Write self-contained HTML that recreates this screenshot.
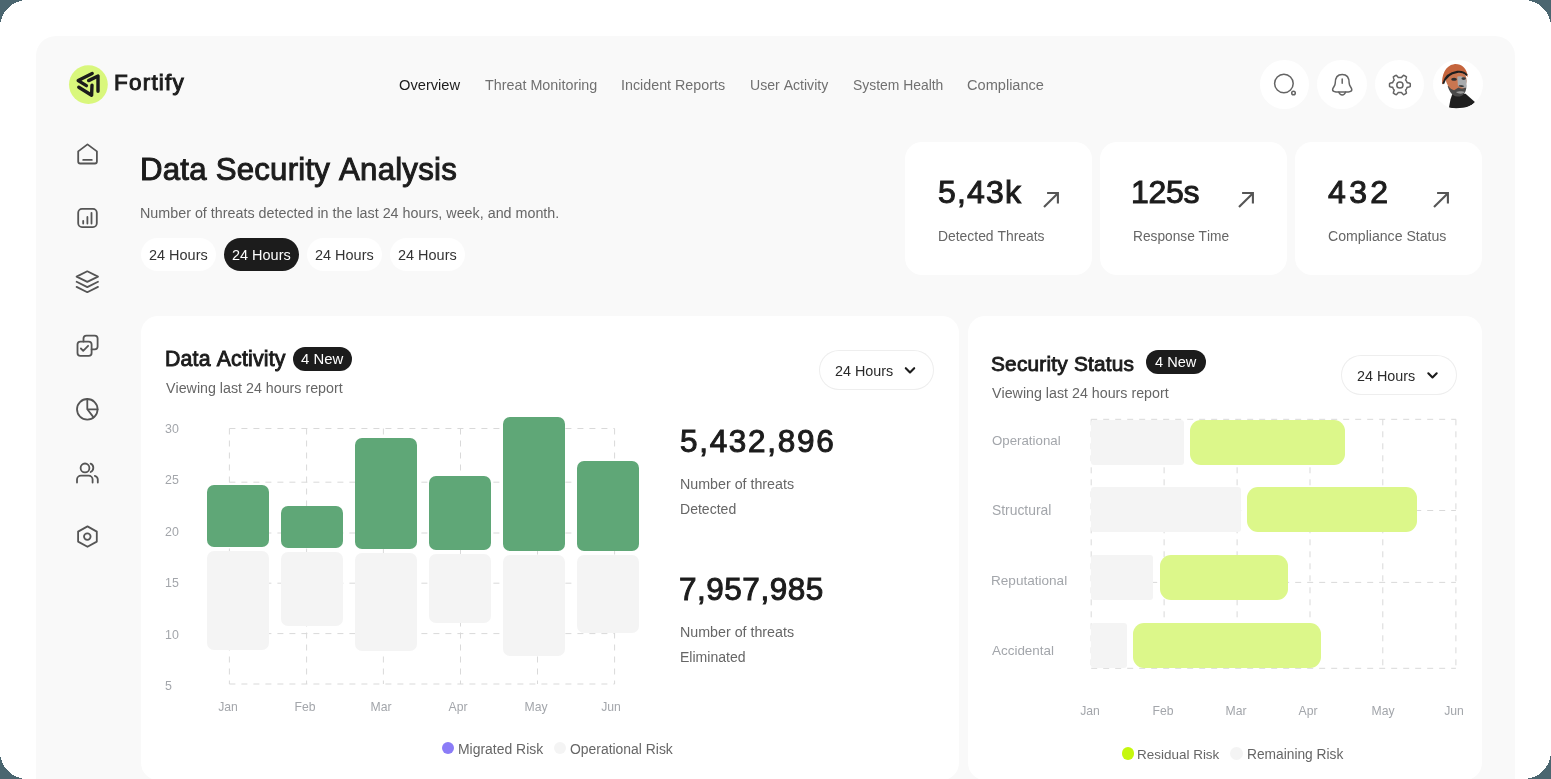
<!DOCTYPE html>
<html><head><meta charset="utf-8">
<style>
html,body{margin:0;padding:0;}
body{width:1551px;height:779px;overflow:hidden;position:relative;background:#4b6670;font-family:"Liberation Sans", sans-serif;}
.frame{position:absolute;left:0;top:0;width:1551px;height:779px;background:#ffffff;}
.t{position:absolute;white-space:nowrap;line-height:1;font-kerning:none;font-variant-ligatures:none;will-change:transform;}
.r{position:absolute;}
</style></head><body>
<div class="frame"></div>
<svg class="r" style="left:0;top:0" width="1551" height="779" viewBox="0 0 1551 779" shape-rendering="crispEdges"><g fill="#4b6670"><path d="M0 0 H27.5 A27.5 27.5 0 0 0 0 27.5 Z"/><path d="M1551 0 H1523.5 A27.5 27.5 0 0 1 1551 27.5 Z"/><path d="M0 779 H27.5 A27.5 27.5 0 0 1 0 751.5 Z"/><path d="M1551 779 H1523.5 A27.5 27.5 0 0 0 1551 751.5 Z"/></g></svg>
<div class="r" style="left:36.00px;top:36.00px;width:1479.00px;height:784.00px;background:#f9f9f9;border-radius:20px;"></div>
<svg class="r" style="left:64px;top:60px" width="50" height="50" viewBox="64 60 50 50">
<circle cx="88.4" cy="84.6" r="19.4" fill="#d9f77c"/>
<g fill="none" stroke="#1c1c1c" stroke-width="3.4" stroke-linecap="round" stroke-linejoin="round">
<path d="M92.2 73.6 L78.2 80.6 L86.4 85.6"/>
<path d="M78.8 87.2 L91.6 95.2 L92.0 85.2"/>
<path d="M88.6 80.6 L98.0 76.0 L98.0 91.2"/>
</g></svg>
<div class="t" style="left:114.15px;top:72.00px;font-size:22.5px;color:#1c1c1c;-webkit-text-stroke:1.0px #1c1c1c;letter-spacing:1.215px;">Fortify</div>
<div class="t" style="left:398.60px;top:78.00px;font-size:14.675px;color:#1c1c1c;">Overview</div>
<div class="t" style="left:485.18px;top:78.00px;font-size:14.335px;color:#707070;">Threat Monitoring</div>
<div class="t" style="left:621.38px;top:78.00px;font-size:14.301px;color:#707070;">Incident Reports</div>
<div class="t" style="left:749.71px;top:78.00px;font-size:14.095px;color:#707070;">User Activity</div>
<div class="t" style="left:852.87px;top:79.00px;font-size:13.908px;color:#707070;">System Health</div>
<div class="t" style="left:967.46px;top:78.00px;font-size:14.58px;color:#707070;">Compliance</div>
<div class="r" style="left:1259.60px;top:59.80px;width:49.40px;height:49.40px;background:#ffffff;border-radius:25px;"></div>
<div class="r" style="left:1317.30px;top:59.80px;width:49.40px;height:49.40px;background:#ffffff;border-radius:25px;"></div>
<div class="r" style="left:1375.00px;top:59.80px;width:49.40px;height:49.40px;background:#ffffff;border-radius:25px;"></div>
<div class="r" style="left:1433.30px;top:59.80px;width:49.40px;height:49.40px;background:#ffffff;border-radius:25px;"></div>
<svg class="r" style="left:0;top:0" width="1551" height="140" viewBox="0 0 1551 140">
<g fill="none" stroke="#646464" stroke-width="1.5" stroke-linecap="round" stroke-linejoin="round">
<circle cx="1283.9" cy="83.5" r="9.3"/>
<circle cx="1293.5" cy="93.0" r="1.8"/>
<g transform="translate(0 0.7)"><path d="M1342.2 73.8 C1336.5 73.8 1335.2 78.5 1335.2 82.5 C1335.2 85.5 1332.6 86.8 1332.6 89 C1332.6 90.3 1334 91 1336 91.2 L1348.4 91.2 C1350.4 91 1351.8 90.3 1351.8 89 C1351.8 86.8 1349.2 85.5 1349.2 82.5 C1349.2 78.5 1347.9 73.8 1342.2 73.8 Z"/>
<path d="M1338.8 91.4 C1339.6 93.6 1340.8 94.4 1342.2 94.4 C1343.6 94.4 1344.8 93.6 1345.6 91.4"/>
<path d="M1342.2 78.4 L1342.2 82.6"/>
</g><circle cx="1399.9" cy="85.0" r="3.1"/>
</g></svg>
<svg class="r" style="left:0;top:0" width="1551" height="140" viewBox="0 0 1551 140"><path d="M1399.90 77.40 L1400.10 77.40 L1400.30 77.41 L1400.50 77.42 L1400.69 77.44 L1400.89 77.47 L1401.09 77.49 L1401.28 77.53 L1401.48 77.57 L1401.78 77.16 L1402.11 76.76 L1402.46 76.37 L1402.83 76.00 L1403.22 75.64 L1403.63 75.29 L1403.88 75.39 L1404.13 75.50 L1404.38 75.61 L1404.62 75.73 L1404.86 75.86 L1405.10 75.99 L1405.33 76.13 L1405.56 76.28 L1405.79 76.43 L1406.01 76.59 L1406.23 76.75 L1406.44 76.92 L1406.35 77.45 L1406.23 77.96 L1406.10 78.47 L1405.93 78.97 L1405.75 79.45 L1405.55 79.91 L1405.68 80.06 L1405.81 80.22 L1405.93 80.37 L1406.05 80.53 L1406.16 80.70 L1406.27 80.86 L1406.38 81.03 L1406.48 81.20 L1406.58 81.37 L1406.67 81.55 L1406.76 81.73 L1406.84 81.91 L1406.92 82.09 L1407.00 82.28 L1407.06 82.46 L1407.13 82.65 L1407.63 82.71 L1408.14 82.79 L1408.65 82.90 L1409.16 83.03 L1409.67 83.19 L1410.17 83.37 L1410.21 83.64 L1410.24 83.91 L1410.27 84.18 L1410.29 84.46 L1410.30 84.73 L1410.30 85.00 L1410.30 85.27 L1410.29 85.54 L1410.27 85.82 L1410.24 86.09 L1410.21 86.36 L1410.17 86.63 L1409.67 86.81 L1409.16 86.97 L1408.65 87.10 L1408.14 87.21 L1407.63 87.29 L1407.13 87.35 L1407.06 87.54 L1407.00 87.72 L1406.92 87.91 L1406.84 88.09 L1406.76 88.27 L1406.67 88.45 L1406.58 88.63 L1406.48 88.80 L1406.38 88.97 L1406.27 89.14 L1406.16 89.30 L1406.05 89.47 L1405.93 89.63 L1405.81 89.78 L1405.68 89.94 L1405.55 90.09 L1405.75 90.55 L1405.93 91.03 L1406.10 91.53 L1406.23 92.04 L1406.35 92.55 L1406.44 93.08 L1406.23 93.25 L1406.01 93.41 L1405.79 93.57 L1405.56 93.72 L1405.33 93.87 L1405.10 94.01 L1404.86 94.14 L1404.62 94.27 L1404.38 94.39 L1404.13 94.50 L1403.88 94.61 L1403.63 94.71 L1403.22 94.36 L1402.83 94.00 L1402.46 93.63 L1402.11 93.24 L1401.78 92.84 L1401.48 92.43 L1401.28 92.47 L1401.09 92.51 L1400.89 92.53 L1400.69 92.56 L1400.50 92.58 L1400.30 92.59 L1400.10 92.60 L1399.90 92.60 L1399.70 92.60 L1399.50 92.59 L1399.30 92.58 L1399.11 92.56 L1398.91 92.53 L1398.71 92.51 L1398.52 92.47 L1398.32 92.43 L1398.02 92.84 L1397.69 93.24 L1397.34 93.63 L1396.97 94.00 L1396.58 94.36 L1396.17 94.71 L1395.92 94.61 L1395.67 94.50 L1395.42 94.39 L1395.18 94.27 L1394.94 94.14 L1394.70 94.01 L1394.47 93.87 L1394.24 93.72 L1394.01 93.57 L1393.79 93.41 L1393.57 93.25 L1393.36 93.08 L1393.45 92.55 L1393.57 92.04 L1393.70 91.53 L1393.87 91.03 L1394.05 90.55 L1394.25 90.09 L1394.12 89.94 L1393.99 89.78 L1393.87 89.63 L1393.75 89.47 L1393.64 89.30 L1393.53 89.14 L1393.42 88.97 L1393.32 88.80 L1393.22 88.63 L1393.13 88.45 L1393.04 88.27 L1392.96 88.09 L1392.88 87.91 L1392.80 87.72 L1392.74 87.54 L1392.67 87.35 L1392.17 87.29 L1391.66 87.21 L1391.15 87.10 L1390.64 86.97 L1390.13 86.81 L1389.63 86.63 L1389.59 86.36 L1389.56 86.09 L1389.53 85.82 L1389.51 85.54 L1389.50 85.27 L1389.50 85.00 L1389.50 84.73 L1389.51 84.46 L1389.53 84.18 L1389.56 83.91 L1389.59 83.64 L1389.63 83.37 L1390.13 83.19 L1390.64 83.03 L1391.15 82.90 L1391.66 82.79 L1392.17 82.71 L1392.67 82.65 L1392.74 82.46 L1392.80 82.28 L1392.88 82.09 L1392.96 81.91 L1393.04 81.73 L1393.13 81.55 L1393.22 81.37 L1393.32 81.20 L1393.42 81.03 L1393.53 80.86 L1393.64 80.70 L1393.75 80.53 L1393.87 80.37 L1393.99 80.22 L1394.12 80.06 L1394.25 79.91 L1394.05 79.45 L1393.87 78.97 L1393.70 78.47 L1393.57 77.96 L1393.45 77.45 L1393.36 76.92 L1393.57 76.75 L1393.79 76.59 L1394.01 76.43 L1394.24 76.28 L1394.47 76.13 L1394.70 75.99 L1394.94 75.86 L1395.18 75.73 L1395.42 75.61 L1395.67 75.50 L1395.92 75.39 L1396.17 75.29 L1396.58 75.64 L1396.97 76.00 L1397.34 76.37 L1397.69 76.76 L1398.02 77.16 L1398.32 77.57 L1398.52 77.53 L1398.71 77.49 L1398.91 77.47 L1399.11 77.44 L1399.30 77.42 L1399.50 77.41 L1399.70 77.40Z" fill="none" stroke="#646464" stroke-width="1.5" stroke-linejoin="round"/></svg>
<svg class="r" style="left:1438px;top:60px" width="40" height="50" viewBox="0 0 623 779">
<defs><clipPath id="avc"><circle cx="311.5" cy="381.6" r="384"/></clipPath></defs>
<g clip-path="url(#avc)">
<path d="M170 745 L195 610 L225 525 L430 525 L575 655 C520 720 400 770 170 745 Z" fill="#1f1f1f"/>
<path d="M150 400 C170 480 220 560 300 570 C380 575 430 520 440 440 L440 380 L300 400 Z" fill="#4a4a4a"/>
<path d="M120 300 C150 210 260 180 360 200 C420 215 450 260 445 330 L430 420 C400 450 350 450 320 430 L250 470 C180 450 130 380 120 300 Z" fill="#c97650"/>
<path d="M300 260 C360 240 430 260 445 320 L440 430 C400 440 340 420 310 400 Z" fill="#a9abad"/>
<ellipse cx="250" cy="300" rx="45" ry="25" fill="#2f2f2f"/>
<ellipse cx="400" cy="290" rx="35" ry="20" fill="#3a3a3a"/>
<path d="M320 400 C350 390 390 395 410 410 C380 425 340 420 320 400 Z" fill="#2f2f2f"/>
<path d="M280 500 C320 480 390 480 420 500 C390 530 320 535 280 500 Z" fill="#9a9a9a"/>
<path d="M65 370 C55 250 110 80 250 65 C360 55 450 120 465 265 C400 200 300 170 200 210 C130 240 90 300 80 380 Z" fill="#c5643c"/>
<path d="M80 370 C110 270 190 200 300 185 C370 178 420 200 450 240" fill="none" stroke="#1f1f1f" stroke-width="32"/>
</g></svg>
<svg class="r" style="left:0;top:120px" width="130" height="450" viewBox="0 120 130 450">
<g fill="none" stroke="#555555" stroke-width="1.8" stroke-linecap="round" stroke-linejoin="round">
<path d="M87.5 144.4 L78.2 151.4 L78.2 161.5 Q78.2 163.5 80.2 163.5 L94.9 163.5 Q96.9 163.5 96.9 161.5 L96.9 151.4 Z"/>
<path d="M83.2 159.9 L91.8 159.9"/>
<rect x="78.2" y="208.9" width="18.6" height="18.2" rx="3.8"/>
<path d="M83.2 220.8 L83.2 223.6 M87.4 216.9 L87.4 223.6 M91.5 212.8 L91.5 223.6"/>
<path d="M87.3 271.3 L76.6 276.6 L87.3 281.9 L98.0 276.6 Z"/>
<path d="M76.6 281.8 L87.3 287.1 L98.0 281.8"/>
<path d="M76.6 286.9 L87.3 292.2 L98.0 286.9"/>
<path d="M83.5 341.6 L83.5 338.5 Q83.5 335.6 86.4 335.6 L94.7 335.6 Q97.6 335.6 97.6 338.5 L97.6 346.6 Q97.6 349.4 94.7 349.4 L91.6 349.4"/>
<rect x="77.5" y="341.7" width="14.1" height="14.1" rx="2.9"/>
<path d="M80.9 348.5 L83.2 350.8 L88.1 345.8"/>
<circle cx="87.3" cy="409.3" r="10.3"/>
<path d="M87.3 399.0 L87.3 409.3 L97.6 409.3 M87.3 409.3 L93.6 417.4"/>
<circle cx="85.0" cy="467.9" r="4.4"/>
<path d="M90.6 463.6 A4.6 4.6 0 0 1 90.6 472.0"/>
<path d="M77.0 482.5 L77.0 479.6 A4 4 0 0 1 81 475.6 L88.6 475.6 A4 4 0 0 1 92.6 479.6 L92.6 482.5"/>
<path d="M94.8 475.8 A4 4 0 0 1 97.8 479.6 L97.8 482.5"/>
<path d="M87.5 526.4 L96.8 531.6 L96.8 541.6 L87.5 546.8 L78.1 541.6 L78.1 531.6 Z"/>
<circle cx="87.3" cy="536.6" r="3.3"/>
</g></svg>
<div class="t" style="left:139.64px;top:154.00px;font-size:31.2px;color:#1c1c1c;-webkit-text-stroke:1.0px #1c1c1c;letter-spacing:0.227px;">Data Security Analysis</div>
<div class="t" style="left:139.83px;top:206.00px;font-size:14.32px;color:#666666;">Number of threats detected in the last 24 hours, week, and month.</div>
<div class="r" style="left:140.50px;top:238.00px;width:75.50px;height:33.00px;background:#ffffff;border-radius:17px;"></div>
<div class="t" style="left:148.57px;top:248.00px;font-size:14.479px;color:#333333;">24 Hours</div>
<div class="r" style="left:224.00px;top:238.00px;width:75.00px;height:33.00px;background:#1c1c1c;border-radius:17px;"></div>
<div class="t" style="left:231.87px;top:248.00px;font-size:14.479px;color:#ffffff;">24 Hours</div>
<div class="r" style="left:306.80px;top:238.00px;width:75.20px;height:33.00px;background:#ffffff;border-radius:17px;"></div>
<div class="t" style="left:315.17px;top:248.00px;font-size:14.479px;color:#333333;">24 Hours</div>
<div class="r" style="left:390.10px;top:238.00px;width:74.90px;height:33.00px;background:#ffffff;border-radius:17px;"></div>
<div class="t" style="left:398.27px;top:248.00px;font-size:14.479px;color:#333333;">24 Hours</div>
<div class="r" style="left:905.00px;top:142.00px;width:187.00px;height:133.00px;background:#ffffff;border-radius:17px;"></div>
<div class="t" style="left:937.92px;top:176.00px;font-size:32px;color:#1c1c1c;-webkit-text-stroke:1.0px #1c1c1c;letter-spacing:1.163px;">5,43k</div>
<div class="t" style="left:937.86px;top:230.00px;font-size:13.903px;color:#666666;">Detected Threats</div>
<svg class="r" style="left:1035px;top:185px" width="30" height="30" viewBox="1035 185 30 30"><g fill="none" stroke="#555" stroke-width="2.1" stroke-linecap="butt"><path d="M1044.0 207.1 L1057.4 193.7"/><path d="M1047.1 193.0 L1057.9 193.0 L1057.9 203.5"/></g></svg>
<div class="r" style="left:1100.00px;top:142.00px;width:187.00px;height:133.00px;background:#ffffff;border-radius:17px;"></div>
<div class="t" style="left:1131.36px;top:176.00px;font-size:32px;color:#1c1c1c;-webkit-text-stroke:1.0px #1c1c1c;letter-spacing:-0.299px;">125s</div>
<div class="t" style="left:1132.67px;top:230.00px;font-size:13.728px;color:#666666;">Response Time</div>
<svg class="r" style="left:1230px;top:185px" width="30" height="30" viewBox="1230 185 30 30"><g fill="none" stroke="#555" stroke-width="2.1" stroke-linecap="butt"><path d="M1239.0 207.1 L1252.4 193.7"/><path d="M1242.1 193.0 L1252.9 193.0 L1252.9 203.5"/></g></svg>
<div class="r" style="left:1295.00px;top:142.00px;width:187.00px;height:133.00px;background:#ffffff;border-radius:17px;"></div>
<div class="t" style="left:1327.77px;top:176.00px;font-size:32px;color:#1c1c1c;-webkit-text-stroke:1.0px #1c1c1c;letter-spacing:3.377px;">432</div>
<div class="t" style="left:1327.78px;top:229.00px;font-size:14.11px;color:#666666;">Compliance Status</div>
<svg class="r" style="left:1425px;top:185px" width="30" height="30" viewBox="1425 185 30 30"><g fill="none" stroke="#555" stroke-width="2.1" stroke-linecap="butt"><path d="M1434.0 207.1 L1447.4 193.7"/><path d="M1437.1 193.0 L1447.9 193.0 L1447.9 203.5"/></g></svg>
<div class="r" style="left:141.00px;top:316.00px;width:818.00px;height:464.00px;background:#ffffff;border-radius:17px;"></div>
<div class="r" style="left:968.00px;top:316.00px;width:514.00px;height:464.00px;background:#ffffff;border-radius:17px;"></div>
<div class="t" style="left:165.35px;top:349.00px;font-size:21.3px;color:#1c1c1c;-webkit-text-stroke:0.9px #1c1c1c;letter-spacing:0.169px;">Data Activity</div>
<div class="r" style="left:292.80px;top:346.70px;width:59.30px;height:24.30px;background:#1c1c1c;border-radius:13px;"></div>
<div class="t" style="left:300.86px;top:352.00px;font-size:14.89px;color:#ffffff;">4 New</div>
<div class="t" style="left:165.74px;top:381.00px;font-size:14.269px;color:#666666;">Viewing last 24 hours report</div>
<div class="r" style="left:818.80px;top:350.10px;width:115.60px;height:40.00px;background:#ffffff;border-radius:20px;box-shadow:inset 0 0 0 1px #eeeeee;"></div>
<div class="t" style="left:834.78px;top:364.00px;font-size:14.379px;color:#2a2a2a;">24 Hours</div>
<svg class="r" style="left:895px;top:360px" width="30" height="20" viewBox="895 360 30 20"><path d="M905.8 368.2 L910 372.4 L914.2 368.2" fill="none" stroke="#1c1c1c" stroke-width="2.1" stroke-linecap="round" stroke-linejoin="round"/></svg>
<div class="t" style="left:679.84px;top:426.00px;font-size:31.5px;color:#1c1c1c;-webkit-text-stroke:1.0px #1c1c1c;letter-spacing:1.689px;">5,432,896</div>
<div class="t" style="left:679.63px;top:477.00px;font-size:14.267px;color:#666666;">Number of threats</div>
<div class="t" style="left:680.00px;top:502.00px;font-size:14.06px;color:#666666;">Detected</div>
<div class="t" style="left:678.89px;top:574.00px;font-size:31.5px;color:#1c1c1c;-webkit-text-stroke:1.0px #1c1c1c;letter-spacing:0.513px;">7,957,985</div>
<div class="t" style="left:679.63px;top:625.00px;font-size:14.267px;color:#666666;">Number of threats</div>
<div class="t" style="left:680.00px;top:650.00px;font-size:14.06px;color:#666666;">Eliminated</div>
<svg class="r" style="left:0;top:0" width="1551" height="779" viewBox="0 0 1551 779"><g fill="none" stroke="#d9d9d9" stroke-width="1" stroke-dasharray="6 6"><path d="M229.4 428.5 H614.6"/><path d="M229.4 482.2 H614.6"/><path d="M229.4 533.0 H614.6"/><path d="M229.4 583.2 H614.6"/><path d="M229.4 633.6 H614.6"/><path d="M229.4 684.0 H614.6"/><path d="M229.4 428.5 V684.0"/><path d="M306.6 428.5 V684.0"/><path d="M383.4 428.5 V684.0"/><path d="M460.5 428.5 V684.0"/><path d="M537.5 428.5 V684.0"/><path d="M614.6 428.5 V684.0"/></g></svg>
<div class="t" style="left:165.33px;top:423.00px;font-size:12.4px;color:#a3a6ab;">30</div>
<div class="t" style="left:165.18px;top:474.00px;font-size:12.4px;color:#a3a6ab;">25</div>
<div class="t" style="left:165.18px;top:526.00px;font-size:12.4px;color:#a3a6ab;">20</div>
<div class="t" style="left:164.86px;top:577.00px;font-size:12.4px;color:#a3a6ab;">15</div>
<div class="t" style="left:164.86px;top:629.00px;font-size:12.4px;color:#a3a6ab;">10</div>
<div class="t" style="left:165.30px;top:680.00px;font-size:12.4px;color:#a3a6ab;">5</div>
<div class="r" style="left:207.40px;top:551.10px;width:61.70px;height:99.40px;background:#f4f4f4;border-radius:7px;"></div>
<div class="r" style="left:207.40px;top:485.30px;width:61.70px;height:61.60px;background:#5fa777;border-radius:7px;"></div>
<div class="r" style="left:281.35px;top:552.00px;width:61.70px;height:74.00px;background:#f4f4f4;border-radius:7px;"></div>
<div class="r" style="left:281.35px;top:505.90px;width:61.70px;height:42.10px;background:#5fa777;border-radius:7px;"></div>
<div class="r" style="left:355.30px;top:552.90px;width:61.70px;height:98.00px;background:#f4f4f4;border-radius:7px;"></div>
<div class="r" style="left:355.30px;top:437.80px;width:61.70px;height:111.00px;background:#5fa777;border-radius:7px;"></div>
<div class="r" style="left:429.25px;top:554.00px;width:61.70px;height:69.20px;background:#f4f4f4;border-radius:7px;"></div>
<div class="r" style="left:429.25px;top:475.60px;width:61.70px;height:74.30px;background:#5fa777;border-radius:7px;"></div>
<div class="r" style="left:503.20px;top:555.40px;width:61.70px;height:100.30px;background:#f4f4f4;border-radius:7px;"></div>
<div class="r" style="left:503.20px;top:417.30px;width:61.70px;height:133.60px;background:#5fa777;border-radius:7px;"></div>
<div class="r" style="left:577.15px;top:555.40px;width:61.70px;height:78.10px;background:#f4f4f4;border-radius:7px;"></div>
<div class="r" style="left:577.15px;top:461.10px;width:61.70px;height:89.80px;background:#5fa777;border-radius:7px;"></div>
<div class="t" style="left:187.60px;top:700.67px;width:80px;text-align:center;font-size:12.2px;color:#a3a6ab;">Jan</div>
<div class="t" style="left:265.00px;top:700.67px;width:80px;text-align:center;font-size:12.2px;color:#a3a6ab;">Feb</div>
<div class="t" style="left:341.00px;top:700.67px;width:80px;text-align:center;font-size:12.2px;color:#a3a6ab;">Mar</div>
<div class="t" style="left:417.50px;top:700.67px;width:80px;text-align:center;font-size:12.2px;color:#a3a6ab;">Apr</div>
<div class="t" style="left:496.00px;top:700.67px;width:80px;text-align:center;font-size:12.2px;color:#a3a6ab;">May</div>
<div class="t" style="left:571.00px;top:700.67px;width:80px;text-align:center;font-size:12.2px;color:#a3a6ab;">Jun</div>
<div class="r" style="left:441.80px;top:742.10px;width:12.20px;height:12.10px;background:#8b7cf7;border-radius:7px;"></div>
<div class="t" style="left:457.76px;top:743.00px;font-size:13.942px;color:#666666;">Migrated Risk</div>
<div class="r" style="left:553.50px;top:742.10px;width:12.40px;height:12.10px;background:#f4f4f4;border-radius:7px;"></div>
<div class="t" style="left:569.74px;top:743.00px;font-size:13.926px;color:#666666;">Operational Risk</div>
<div class="t" style="left:991.46px;top:354.00px;font-size:20.8px;color:#1c1c1c;-webkit-text-stroke:0.9px #1c1c1c;letter-spacing:0.222px;">Security Status</div>
<div class="r" style="left:1146.40px;top:349.90px;width:59.60px;height:24.50px;background:#1c1c1c;border-radius:13px;"></div>
<div class="t" style="left:1154.97px;top:355.00px;font-size:14.57px;color:#ffffff;">4 New</div>
<div class="t" style="left:992.34px;top:386.00px;font-size:14.253px;color:#666666;">Viewing last 24 hours report</div>
<div class="r" style="left:1341.30px;top:355.30px;width:115.60px;height:40.20px;background:#ffffff;border-radius:20px;box-shadow:inset 0 0 0 1px #eeeeee;"></div>
<div class="t" style="left:1357.28px;top:369.00px;font-size:14.379px;color:#2a2a2a;">24 Hours</div>
<svg class="r" style="left:1420px;top:365px" width="30" height="20" viewBox="1420 365 30 20"><path d="M1428.3 373.3 L1432.5 377.5 L1436.7 373.3" fill="none" stroke="#1c1c1c" stroke-width="2.1" stroke-linecap="round" stroke-linejoin="round"/></svg>
<svg class="r" style="left:0;top:0" width="1551" height="779" viewBox="0 0 1551 779"><g fill="none" stroke="#d9d9d9" stroke-width="1" stroke-dasharray="6 6"><path d="M1091.2 419.3 H1455.9"/><path d="M1091.2 510.5 H1455.9"/><path d="M1091.2 582.4 H1455.9"/><path d="M1091.2 668.3 H1455.9"/><path d="M1091.2 419.3 V668.3"/><path d="M1164.1 419.3 V668.3"/><path d="M1237.1 419.3 V668.3"/><path d="M1310.0 419.3 V668.3"/><path d="M1382.8 419.3 V668.3"/><path d="M1455.9 419.3 V668.3"/></g></svg>
<div class="r" style="left:1091.20px;top:419.60px;width:92.60px;height:45.20px;background:#f4f4f4;border-radius:3px;"></div>
<div class="r" style="left:1190.10px;top:419.60px;width:155.40px;height:45.20px;background:#dcf78a;border-radius:11px;"></div>
<div class="r" style="left:1091.20px;top:487.20px;width:149.60px;height:45.20px;background:#f4f4f4;border-radius:3px;"></div>
<div class="r" style="left:1247.00px;top:487.20px;width:169.60px;height:45.20px;background:#dcf78a;border-radius:11px;"></div>
<div class="r" style="left:1091.20px;top:555.20px;width:61.60px;height:45.20px;background:#f4f4f4;border-radius:3px;"></div>
<div class="r" style="left:1160.30px;top:555.20px;width:127.80px;height:45.20px;background:#dcf78a;border-radius:11px;"></div>
<div class="r" style="left:1091.20px;top:623.00px;width:35.90px;height:45.20px;background:#f4f4f4;border-radius:3px;"></div>
<div class="r" style="left:1133.00px;top:623.00px;width:187.80px;height:45.20px;background:#dcf78a;border-radius:11px;"></div>
<div class="t" style="left:991.77px;top:434.00px;font-size:13.272px;color:#a3a6ab;">Operational</div>
<div class="t" style="left:991.77px;top:504.00px;font-size:13.871px;color:#a3a6ab;">Structural</div>
<div class="t" style="left:991.29px;top:574.00px;font-size:13.574px;color:#a3a6ab;">Reputational</div>
<div class="t" style="left:992.37px;top:644.00px;font-size:13.444px;color:#a3a6ab;">Accidental</div>
<div class="t" style="left:1049.50px;top:705.27px;width:80px;text-align:center;font-size:12.2px;color:#a3a6ab;">Jan</div>
<div class="t" style="left:1122.50px;top:705.27px;width:80px;text-align:center;font-size:12.2px;color:#a3a6ab;">Feb</div>
<div class="t" style="left:1196.00px;top:705.27px;width:80px;text-align:center;font-size:12.2px;color:#a3a6ab;">Mar</div>
<div class="t" style="left:1268.20px;top:705.27px;width:80px;text-align:center;font-size:12.2px;color:#a3a6ab;">Apr</div>
<div class="t" style="left:1342.60px;top:705.27px;width:80px;text-align:center;font-size:12.2px;color:#a3a6ab;">May</div>
<div class="t" style="left:1414.20px;top:705.27px;width:80px;text-align:center;font-size:12.2px;color:#a3a6ab;">Jun</div>
<div class="r" style="left:1121.60px;top:747.10px;width:12.40px;height:12.70px;background:#c5f70d;border-radius:7px;"></div>
<div class="t" style="left:1137.49px;top:748.00px;font-size:13.477px;color:#666666;">Residual Risk</div>
<div class="r" style="left:1230.40px;top:747.10px;width:12.40px;height:12.70px;background:#f4f4f4;border-radius:7px;"></div>
<div class="t" style="left:1246.57px;top:748.00px;font-size:13.753px;color:#666666;">Remaining Risk</div>
</body></html>
